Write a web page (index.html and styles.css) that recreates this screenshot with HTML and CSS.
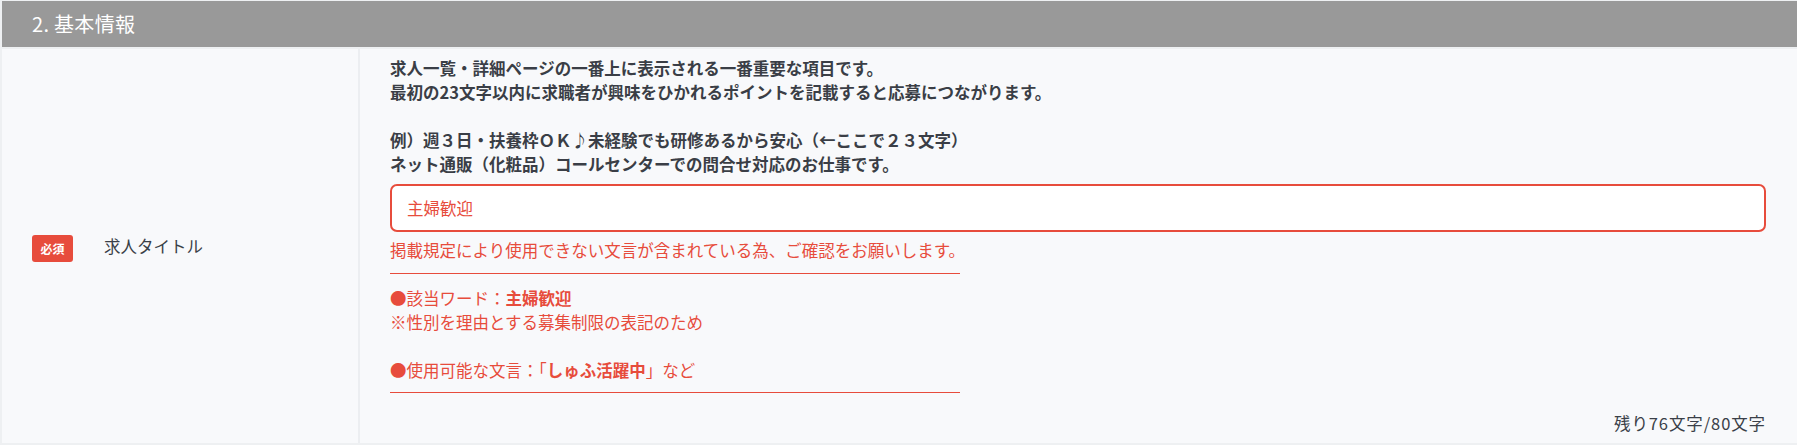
FILE: index.html
```html
<!DOCTYPE html>
<html lang="ja">
<head>
<meta charset="utf-8">
<title>基本情報</title>
<link rel="stylesheet" href="styles.css">
</head>
<body>
<section class="section">
  <h2 class="section-head">2. 基本情報</h2>
  <div class="row">
    <div class="label-cell">
      <span class="badge">必須</span>
      <span class="label">求人タイトル</span>
    </div>
    <div class="field-cell">
      <p class="guide">求人一覧・詳細ページの一番上に表示される一番重要な項目です。<br>最初の23文字以内に求職者が興味をひかれるポイントを記載すると応募につながります。<br><br>例）週３日・扶養枠ＯＫ♪未経験でも研修あるから安心（←ここで２３文字）<br>ネット通販（化粧品）コールセンターでの問合せ対応のお仕事です。</p>
      <div class="input">主婦歓迎</div>
      <p class="error">掲載規定により使用できない文言が含まれている為、ご確認をお願いします。</p>
      <hr class="rule">
      <p class="warn">●該当ワード：<strong>主婦歓迎</strong><br>※性別を理由とする募集制限の表記のため<br><br>●使用可能な文言：「<strong>しゅふ活躍中</strong>」など</p>
      <hr class="rule">
      <p class="counter">残り76文字/80文字</p>
    </div>
  </div>
</section>
</body>
</html>
```
FILE: styles.css
```css
html, body {
  margin: 0;
  padding: 0;
  background: #ffffff;
}
body {
  font-family: "Noto Sans CJK JP", "Noto Sans", sans-serif;
  color: #333842;
}
.section {
  border-top: 1px solid #eef0f2;
  border-left: 2px solid #eef0f2;
  border-bottom: 2px solid #eef0f2;
  background: #f8f9fb;
}
.section-head {
  margin: 0;
  height: 46px;
  background: #999999;
  color: #ffffff;
  font-weight: 400;
  font-size: 20px;
  letter-spacing: 0.3px;
  line-height: 46px;
  padding-left: 30px;
  border-bottom: 2px solid #eef0f2;
}
.row {
  display: grid;
  grid-template-columns: 358px 1fr;
  height: 394px;
}
.label-cell {
  display: flex;
  align-items: center;
  padding-left: 30px;
  gap: 31px;
  border-right: 2px solid #eceef1;
}
.badge {
  display: inline-flex;
  align-items: center;
  justify-content: center;
  width: 41px;
  height: 27px;
  background: #e74c3c;
  color: #ffffff;
  border-radius: 3px;
  font-size: 12px;
  font-weight: 700;
  margin-top: 4px;
}
.label {
  font-size: 16.5px;
  color: #3a3f48;
}
.field-cell {
  padding: 7px 31px 0 30px;
  display: flex;
  flex-direction: column;
}
.guide {
  margin: 0;
  font-size: 16.5px;
  line-height: 24px;
  font-weight: 700;
  color: #3a3e46;
}
.input {
  margin-top: 8px;
  height: 48px;
  box-sizing: border-box;
  border: 2px solid #e74c3c;
  border-radius: 7px;
  background: #ffffff;
  color: #e74c3c;
  font-size: 16.5px;
  display: flex;
  align-items: center;
  padding-left: 15px;
}
.error {
  margin: 6px 0 0;
  font-size: 16.5px;
  line-height: 24px;
  color: #e74c3c;
  white-space: nowrap;
}
.rule {
  width: 570px;
  height: 0;
  margin: 11px 0 0;
  border: 0;
  border-top: 1px solid #e74c3c;
  align-self: flex-start;
}
.warn {
  margin: 12px 0 10px;
  font-size: 16.5px;
  line-height: 24px;
  color: #e74c3c;
  white-space: nowrap;
}
.warn + .rule {
  margin-top: 0;
}
.warn strong {
  font-weight: 700;
}
.counter {
  margin: 18px 0 0;
  text-align: right;
  font-size: 16.5px;
  letter-spacing: 0.9px;
  line-height: 24px;
  color: #3a3f48;
}
```
